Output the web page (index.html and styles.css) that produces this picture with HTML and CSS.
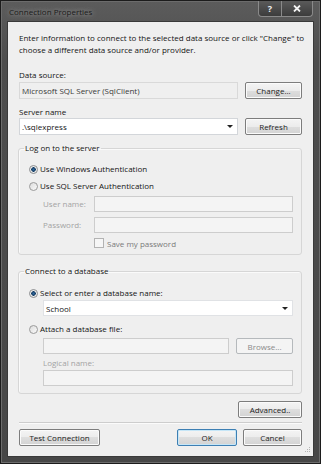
FILE: index.html
```html
<!DOCTYPE HTML>
<html>

<head>
    <meta charset="UTF-8">
    <title>Connection Properties</title>
    <link rel="stylesheet" href="styles.css">
</head>

<body>
    <div class="window">
        <div class="titlebar">
            <span class="title">Connection Properties</span>
            <div class="caption">
                <span class="caption-button help">?</span>
                <span class="caption-button close">
                    <svg width="8" height="7" viewBox="0 0 8 7">
                        <path d="M1 0.5 L7 6.5 M7 0.5 L1 6.5" stroke="#f2f2f2" stroke-width="1.8" fill="none"/>
                    </svg>
                </span>
            </div>
        </div>

        <div class="client">
            <p class="intro">Enter information to connect to the selected data source or click "Change" to choose a different data source and/or provider.</p>

            <div class="label source-label">Data source:</div>
            <div class="row source-row">
                <div class="textbox readonly">Microsoft SQL Server (SqlClient)</div>
                <button class="button side">Change...</button>
            </div>

            <div class="label server-label">Server name</div>
            <div class="row">
                <div class="combo">.\sqlexpress<span class="arrow"></span></div>
                <button class="button side">Refresh</button>
            </div>

            <fieldset class="group logon">
                <legend>Log on to the server</legend>
                <div class="group-body">
                    <div class="option"><span class="radio checked"></span>Use Windows Authentication</div>
                    <div class="option next"><span class="radio"></span>Use SQL Server Authentication</div>
                    <div class="credentials">
                        <span class="muted">User name:</span>
                        <div class="textbox disabled"></div>
                        <span class="muted">Password:</span>
                        <div class="textbox disabled"></div>
                        <span></span>
                        <div class="check"><span class="checkbox"></span>Save my password</div>
                    </div>
                </div>
            </fieldset>

            <fieldset class="group database">
                <legend>Connect to a database</legend>
                <div class="group-body">
                    <div class="option"><span class="radio checked"></span>Select or enter a database name:</div>
                    <div class="combo indent db-combo">School<span class="arrow"></span></div>
                    <div class="option attach"><span class="radio"></span>Attach a database file:</div>
                    <div class="row indent attach-row">
                        <div class="textbox disabled"></div>
                        <button class="button side" disabled>Browse...</button>
                    </div>
                    <div class="muted indent logical-label">Logical name:</div>
                    <div class="textbox disabled indent logical-box"></div>
                </div>
            </fieldset>

            <div class="row advanced-row">
                <button class="button advanced">Advanced..</button>
            </div>

            <div class="separator"></div>

            <div class="row footer">
                <button class="button test">Test Connection</button>
                <button class="button default ok">OK</button>
                <button class="button cancel">Cancel</button>
            </div>

            <svg class="grip" width="6" height="6" viewBox="0 0 6 6">
                <rect x="4" y="0" width="1" height="1" fill="#b4b4b4"/>
                <rect x="2" y="2" width="1" height="1" fill="#b4b4b4"/>
                <rect x="4" y="2" width="1" height="1" fill="#b4b4b4"/>
                <rect x="0" y="4" width="1" height="1" fill="#b4b4b4"/>
                <rect x="2" y="4" width="1" height="1" fill="#b4b4b4"/>
                <rect x="4" y="4" width="1" height="1" fill="#b4b4b4"/>
            </svg>
        </div>
    </div>
</body>

</html>
```

FILE: styles.css
```css
body {
    margin: 0;
    background: #1e1e1e;
    font-family: "Open Sans", sans-serif;
    font-size: 8px;
    color: #141414;
}

.window {
    width: 321px;
    height: 464px;
    box-sizing: border-box;
    display: flex;
    flex-direction: column;
    border: 1px solid #1c1c1c;
    background: linear-gradient(#5c5c5c, #4d4d4d 60px, #474747);
    box-shadow: inset 0 0 0 1px #6c6c6c;
}

.titlebar {
    height: 21px;
    display: flex;
    align-items: flex-start;
}

.title {
    margin: 5px 0 0 8px;
    line-height: 12px;
    color: #1a1a1a;
    text-shadow: 0 0 4px rgba(220, 220, 220, 0.6), 0 0 8px rgba(220, 220, 220, 0.4);
}

.caption {
    margin: 0 7px 0 auto;
    height: 15px;
    display: flex;
    border: 1px solid #8a8a8a;
    border-top: 0;
    border-radius: 0 0 4px 4px;
    background: linear-gradient(#5a5a5a, #3c3c3c);
    overflow: hidden;
}

.caption-button {
    display: flex;
    align-items: center;
    justify-content: center;
    color: #f2f2f2;
    font-weight: bold;
    font-size: 9px;
}

.help {
    width: 22px;
    border-right: 1px solid #8a8a8a;
}

.close {
    width: 30px;
}

.client {
    position: relative;
    flex: 1;
    margin: 0 7px 7px;
    padding: 10px 11px 0;
    background: #efefef;
    box-shadow: 0 0 0 1px #3a3a3a;
}

.intro {
    margin: 0 -6px 0 0;
    line-height: 12px;
}

.label {
    line-height: 12px;
}

.source-label {
    margin-top: 13px;
}

.source-row {
    margin-top: 1px;
}

.server-label {
    margin-top: 7px;
}

.row {
    display: flex;
    gap: 7px;
}

.textbox,
.combo {
    flex: 1;
    height: 17px;
    box-sizing: border-box;
    padding: 0 2px;
    line-height: 15px;
    border: 1px solid #d3d6da;
    background: #fff;
    white-space: nowrap;
}

.textbox.readonly {
    background: #efefef;
    border-color: #d9d9d9;
    color: #3a3a3a;
}

.textbox.disabled {
    height: 16px;
    background: #f4f4f4;
    border-color: #cdcdcd;
}

.combo {
    display: flex;
    align-items: center;
    justify-content: space-between;
    padding-right: 4px;
}

.arrow {
    border-left: 3px solid transparent;
    border-right: 3px solid transparent;
    border-top: 3px solid #222;
}

.button {
    height: 17px;
    box-sizing: border-box;
    padding: 0;
    font: inherit;
    color: #1e1e1e;
    border: 1px solid #7d7d7d;
    border-radius: 2px;
    background: linear-gradient(#f4f4f4, #ececec 50%, #dedede 50%, #d3d3d3);
    box-shadow: inset 0 0 0 1px #fbfbfb;
}

.button:disabled {
    color: #8a8a8a;
    border-color: #b5b9bc;
    background: #f4f4f4;
    box-shadow: none;
}

.button.side {
    width: 57px;
}

.group {
    margin: 0 0 0 -1px;
    padding: 0;
    min-width: 0;
    border: 1px solid #d6d6d6;
    border-radius: 3px;
    box-shadow: inset 1px 1px 0 #fafafa;
}

.group legend {
    margin-left: 5px;
    padding: 0 1px;
    line-height: 12px;
}

.logon {
    margin-top: 7px;
}

.database {
    margin-top: 10px;
}

.group-body {
    padding: 9px 8px 4px 10px;
}

.database .group-body {
    padding-top: 10px;
    padding-bottom: 7px;
}

.option {
    display: flex;
    align-items: center;
    line-height: 12px;
}

.option.next {
    margin-top: 5px;
}

.radio {
    width: 9px;
    height: 9px;
    box-sizing: border-box;
    margin-right: 2px;
    border: 1px solid #9a9a9a;
    border-radius: 50%;
    background: linear-gradient(135deg, #dcdcdc, #fafafa);
}

.radio.checked {
    border-color: #8a8c8e;
    background: radial-gradient(circle, #2f6aa0 0, #143c63 2px, #e8e8e8 2.5px, #f8f8f8);
}

.credentials {
    display: grid;
    grid-template-columns: 51px 1fr;
    grid-template-rows: 16px 16px 12px;
    row-gap: 5px;
    align-items: center;
    margin: 4px 0 0 14px;
}

.muted {
    color: #a3a3a3;
    line-height: 12px;
}

.check {
    display: flex;
    align-items: center;
    margin-top: -2px;
    color: #7a7a7a;
}

.checkbox {
    width: 8px;
    height: 8px;
    margin-right: 3px;
    border: 1px solid #b3b3b3;
    background: #f6f6f6;
}

.indent {
    margin-left: 14px;
}

.db-combo {
    margin-top: 1px;
    height: 16px;
    border-color: #e0e2e5;
}

.option.attach {
    margin-top: 7px;
}

.attach-row {
    margin-top: 3px;
}

.attach-row .button {
    height: 16px;
}

.logical-label {
    margin-top: 3px;
}

.logical-box {
    margin-top: 1px;
}

.advanced-row {
    justify-content: flex-end;
    margin-top: 7px;
}

.button.advanced {
    width: 64px;
}

.separator {
    margin-top: 4px;
    border-top: 1px solid #cdcdcd;
    border-bottom: 1px solid #fbfbfb;
}

.footer {
    margin-top: 5px;
    gap: 6px;
}

.button.test {
    width: 81px;
    margin-right: auto;
}

.button.ok {
    width: 60px;
}

.button.default {
    border-color: #3d7fb3;
    box-shadow: inset 0 0 0 1px #c6e6f7;
}

.button.cancel {
    width: 59px;
}

.grip {
    position: absolute;
    right: 2px;
    bottom: 3px;
}
```
